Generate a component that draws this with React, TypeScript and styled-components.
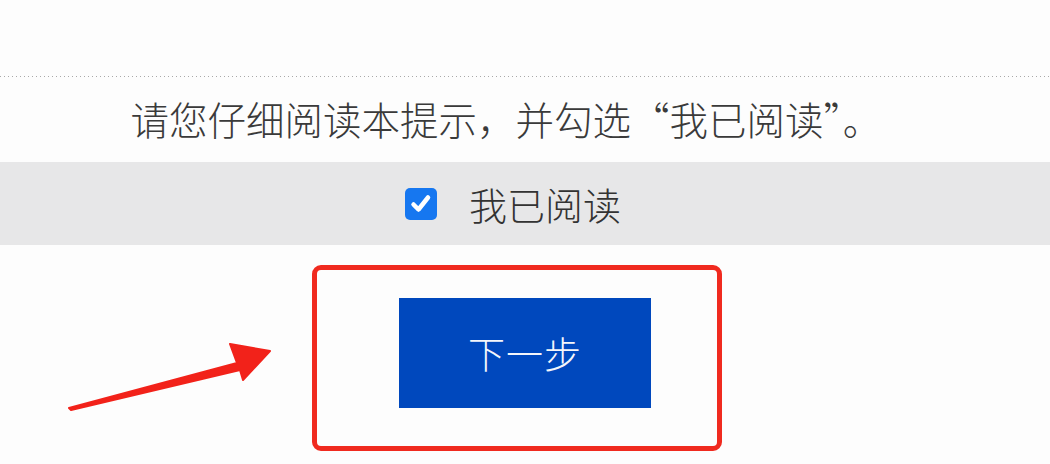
import React, { useState } from 'react'
import styled, { createGlobalStyle } from 'styled-components'

const GlobalStyle = createGlobalStyle`
  html, body {
    margin: 0;
    padding: 0;
    background: #fdfdfd;
  }
  body {
    font-family: "Noto Sans CJK SC", "Noto Sans", sans-serif;
    color: #333;
  }
`

const Page = styled.div`
  width: 1050px;
  height: 464px;
  overflow: hidden;
  position: relative;
  display: flex;
  flex-direction: column;
`

const TopSpace = styled.div`
  height: 76px;
`

const DottedRule = styled.div`
  height: 1px;
  background-image: repeating-linear-gradient(
    to right,
    #a9a9a9 0,
    #a9a9a9 1px,
    transparent 1px,
    transparent 4px
  );
`

const Notice = styled.p`
  margin: 0;
  height: 82px;
  padding-bottom: 3px;
  display: flex;
  align-items: center;
  justify-content: center;
  padding-right: 38px;
  font-size: 38.5px;
  font-weight: 300;
  color: #3a3a3a;
`

const ConfirmBand = styled.label`
  height: 83px;
  background: #e7e7e8;
  display: flex;
  align-items: center;
  justify-content: center;
  gap: 32px;
  padding-right: 24px;
  font-size: 38px;
  font-weight: 300;
  color: #333;
  cursor: pointer;
`

const Box = styled.span<{ $checked: boolean }>`
  width: 32px;
  height: 32px;
  border-radius: 5px;
  background: ${(p) => (p.$checked ? '#1677f0' : '#fff')};
  display: flex;
  align-items: center;
  justify-content: center;
`

const HiddenInput = styled.input`
  display: none;
`

const ButtonArea = styled.div`
  display: flex;
  justify-content: center;
  padding-top: 53px;
`

const ButtonHolder = styled.div`
  position: relative;
`

const NextButton = styled.button`
  width: 252px;
  height: 110px;
  border: none;
  background: #0048bd;
  color: #f4f6fb;
  font-family: "Noto Sans CJK SC", sans-serif;
  font-size: 37px;
  font-weight: 300;
  letter-spacing: 1px;
  cursor: pointer;
`

const Highlight = styled.div`
  position: absolute;
  left: -87px;
  top: -33px;
  width: 400px;
  height: 176px;
  border: 5px solid #f02a1f;
  border-radius: 9px;
  pointer-events: none;
`

const Arrow = styled.svg`
  position: absolute;
  left: 60px;
  top: 335px;
  pointer-events: none;
`

export default function App() {
  const [checked, setChecked] = useState(true)

  return (
    <Page>
      <GlobalStyle />
      <TopSpace />
      <DottedRule />
      <Notice>请您仔细阅读本提示，并勾选“我已阅读”。</Notice>
      <ConfirmBand>
        <HiddenInput
          type="checkbox"
          checked={checked}
          onChange={(e) => setChecked(e.target.checked)}
        />
        <Box $checked={checked}>
          {checked && (
            <svg width="24" height="24" viewBox="0 0 24 24">
              <path
                d="M4.5 12.5 L9.5 17.5 L19 5.5"
                fill="none"
                stroke="#fff"
                strokeWidth="4.5"
                strokeLinecap="round"
                strokeLinejoin="round"
              />
            </svg>
          )}
        </Box>
        <span>我已阅读</span>
      </ConfirmBand>
      <ButtonArea>
        <ButtonHolder>
          <NextButton>下一步</NextButton>
          <Highlight />
        </ButtonHolder>
      </ButtonArea>
      <Arrow width="220" height="80" viewBox="0 0 220 80">
        <path
          d="M9 73 L177 28 L170 9 L210 16 L183 45 L180 35 L11 75 Z"
          fill="#f2221a"
          stroke="#f2221a"
          strokeWidth="2"
          strokeLinejoin="round"
        />
      </Arrow>
    </Page>
  )
}
